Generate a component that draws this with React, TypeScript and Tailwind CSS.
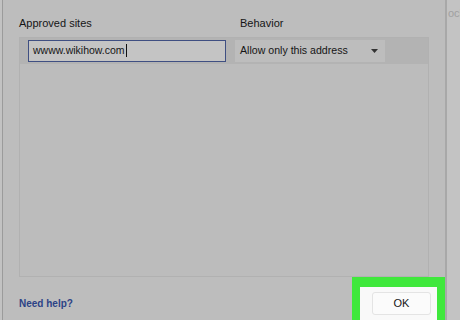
export default function App() {
  const font = { fontFamily: '"Liberation Sans", Arial, sans-serif' };
  return (
    <div
      className="w-[460px] h-[320px] overflow-hidden flex bg-[#bdbdbd] text-[#151515]"
      style={font}
    >
      {/* left edge of dialog */}
      <div className="w-[2px] bg-[#c2c2c2]" />
      <div className="w-px bg-[#9b9b9b]" />

      {/* dialog body */}
      <div className="flex-1 flex flex-col pl-[16px] pr-[16px]">
        <div className="flex pt-[17px] h-[37px] text-[11px] leading-[13px]">
          <div className="w-[221px]">Approved sites</div>
          <div>Behavior</div>
        </div>

        <div className="h-[246px] border border-[#b1b1b1] bg-[#bcbcbc] flex flex-col">
          <div className="h-[26px] bg-[#b3b3b3] flex items-center pl-[8px]">
            <div className="w-[198px] h-[22px] border-[1.5px] border-[#3f4f82] bg-[#c4c4c4] flex items-center pl-[4px] text-[10.5px]">
              wwww.wikihow.com
              <span className="inline-block w-px h-[13px] bg-[#111] ml-px" />
            </div>
            <div className="ml-[9px] w-[150px] h-[22px] bg-[#bdbdbd] flex items-center pl-[5px] pr-[7px] text-[10.6px]">
              <span className="flex-1">Allow only this address</span>
              <svg width="7" height="4" viewBox="0 0 7 4">
                <path d="M0 0h7L3.5 4z" fill="#333" />
              </svg>
            </div>
          </div>
        </div>

        <div className="flex-1 flex items-end justify-between">
          <span className="mb-[9px] text-[10px] font-bold text-[#2c4386]">Need help?</span>
          <div className="mr-[-16px] w-[93px] h-[43px] bg-[#3fe83c] pt-[10px] pl-[8px] pr-[8px]">
            <div className="h-full bg-[#f9f9f9] pt-[5px] pl-[12px] pr-[6px]">
              <div className="h-[23px] bg-[#fbfbfb] border border-[#e4e4e4] rounded-[3px] flex items-center justify-center text-[11px]">
                OK
              </div>
            </div>
          </div>
        </div>
      </div>

      {/* right edge */}
      <div className="w-[2px] bg-[#a8a8a8]" />
      <div className="w-[13px] bg-[#c3c3c3] pl-[1px] pt-[5px] text-[11px] text-[#a0a0a0] overflow-hidden whitespace-nowrap">
        ock
      </div>
    </div>
  );
}
